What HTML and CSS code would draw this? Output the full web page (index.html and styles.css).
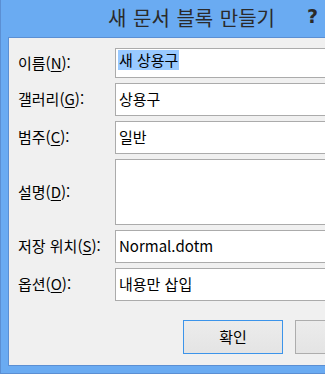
FILE: index.html
```html
<!DOCTYPE html>
<html lang="ko">
<head>
    <meta charset="UTF-8">
    <title>새 문서 블록 만들기</title>
    <link rel="stylesheet" href="styles.css">
</head>
<body>
    <div class="window">
        <div class="titlebar">
            <div class="title">새 문서 블록 만들기</div>
            <div class="help">?</div>
        </div>
        <div class="client">
            <div class="form">
                <label class="label">이름(<u>N</u>):</label>
                <div class="field field-first"><span class="selected">새 상용구</span></div>

                <label class="label">갤러리(<u>G</u>):</label>
                <div class="field">상용구</div>

                <label class="label">범주(<u>C</u>):</label>
                <div class="field">일반</div>

                <label class="label">설명(<u>D</u>):</label>
                <div class="field field-tall"></div>

                <label class="label">저장 위치(<u>S</u>):</label>
                <div class="field">Normal.dotm</div>

                <label class="label">옵션(<u>O</u>):</label>
                <div class="field">내용만 삽입</div>
            </div>
            <div class="buttons">
                <button class="btn btn-default">확인</button>
                <!-- cancel button, its caption lies past the visible edge -->
                <button class="btn" title="취소"></button>
            </div>
        </div>
    </div>
</body>
</html>
```

FILE: styles.css
```css
:root {
    --frame-color: #6aabf2;
    --frame-edge: #5b8fd3;
    --client-bg: #f0f0f0;
    --field-border: #ababab;
    --text-color: #000;
}
* {
    margin: 0;
    padding: 0;
    box-sizing: border-box;
}
body {
    font-family: 'Noto Sans CJK KR', 'Noto Sans', sans-serif;
    color: var(--text-color);
    overflow: hidden;
}
.window {
    width: 325px;
    height: 374px;
    background: var(--frame-color);
    border-left: 1px solid var(--frame-edge);
    border-bottom: 1px solid var(--frame-edge);
    padding: 0 0 7px 7px;
    display: flex;
    flex-direction: column;
    overflow: hidden;
}
.titlebar {
    height: 37px;
    flex-shrink: 0;
    display: flex;
    align-items: center;
    justify-content: space-between;
    padding: 0 7px 2px 100px;
    color: #2a2a2a;
}
.title {
    font-size: 20px;
    line-height: 1;
    word-spacing: 1px;
}
.help {
    font-family: 'DejaVu Sans', sans-serif;
    font-size: 19px;
    font-weight: bold;
    line-height: 1;
    margin-bottom: 2px;
}
.client {
    flex: 1;
    width: 420px;
    background: var(--client-bg);
    border: 1px solid var(--frame-edge);
    padding: 10px 0 0 9px;
}
.form {
    display: grid;
    grid-template-columns: 97px 260px;
    grid-template-rows: 30px 33px 33px 66px 33px 33px;
    row-gap: 5px;
}
.label {
    font-size: 15px;
    line-height: 20px;
    display: flex;
    align-items: center;
    padding-bottom: 1px;
}
.label u {
    text-underline-offset: 2px;
}
.field {
    background: white;
    border: 1px solid var(--field-border);
    font-size: 15px;
    line-height: 20px;
    padding: 0 3px 1px 3px;
    display: flex;
    align-items: center;
}
.field-first {
    align-items: flex-start;
    padding: 1px 2px 0 2px;
}
.field-tall {
    align-items: flex-start;
}
.selected {
    background: #99c9ff;
    padding: 0 1px;
}
.buttons {
    display: flex;
    gap: 12px;
    margin-top: 19px;
    padding-left: 165px;
}
.btn {
    width: 100px;
    height: 34px;
    font-family: inherit;
    font-size: 15px;
    color: var(--text-color);
    background: linear-gradient(#ececec, #e4e4e4);
    border: 1px solid #adadad;
    padding-bottom: 2px;
}
.btn-default {
    border-color: #3c94ea;
}
```
